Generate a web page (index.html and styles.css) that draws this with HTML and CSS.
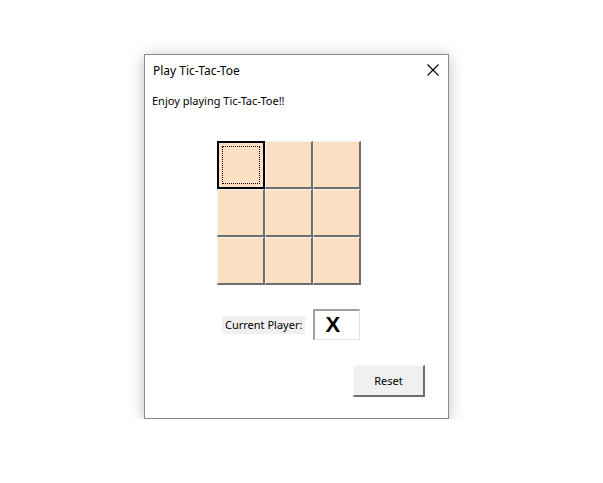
FILE: index.html
```html
<!DOCTYPE html>
<html>
<head>
    <title>Play Tic-Tac-Toe</title>
    <link rel="stylesheet" href="styles.css">
</head>
<body>
    <div class="window">
        <div class="titlebar">
            <span class="title">Play Tic-Tac-Toe</span>
            <span class="close">
                <svg width="12" height="12" viewBox="0 0 12 12">
                    <path d="M0.5 0.5 L11.5 11.5 M11.5 0.5 L0.5 11.5" stroke="#000" stroke-width="1.1" fill="none"/>
                </svg>
            </span>
        </div>
        <p class="intro">Enjoy playing Tic-Tac-Toe!!</p>

        <div class="board">
            <div class="cell focused"><div class="focus-ring"></div></div>
            <div class="cell"></div>
            <div class="cell"></div>
            <div class="cell"></div>
            <div class="cell"></div>
            <div class="cell"></div>
            <div class="cell"></div>
            <div class="cell"></div>
            <div class="cell"></div>
        </div>

        <div class="status">
            <span class="label">Current Player:</span>
            <span class="player">X</span>
        </div>

        <div class="actions">
            <button class="reset">Reset</button>
        </div>
    </div>
</body>
</html>
```

FILE: styles.css
```css
body {
    margin: 0;
    background-color: #fff;
    font-family: "Noto Sans", "Open Sans", sans-serif;
    font-size: 11px;
    color: #000;
}
.window {
    margin: 54px 0 0 144px;
    width: 303px;
    height: 363px;
    border: 1px solid #8a8a8a;
    background-color: #fff;
    box-shadow: 0 2px 14px rgba(0, 0, 0, 0.25);
}
.titlebar {
    display: flex;
    justify-content: space-between;
    align-items: center;
    height: 30px;
    padding: 0 9px 0 8px;
}
.title {
    font-size: 12px;
}
.close {
    display: flex;
}
.intro {
    margin: 8px 0 0 7px;
}
.board {
    display: grid;
    grid-template-columns: repeat(3, 48px);
    grid-template-rows: repeat(3, 48px);
    width: 144px;
    margin: 33px 0 0 72px;
}
.cell {
    box-sizing: border-box;
    background-color: #fde0c4;
    border-top: 1px solid #f4f4f4;
    border-left: 1px solid #f4f4f4;
    border-right: 2px solid #6e6e6e;
    border-bottom: 2px solid #6e6e6e;
}
.cell.focused {
    border: 2px solid #000;
    padding: 3px;
}
.focus-ring {
    height: 100%;
    border: 1px dotted #000;
    box-sizing: border-box;
}
.status {
    display: flex;
    align-items: center;
    margin: 24px 0 0 77px;
}
.label {
    background-color: #f0f0f0;
    padding: 1px 3px;
    height: 16px;
    line-height: 16px;
}
.player {
    box-sizing: border-box;
    width: 47px;
    height: 31px;
    margin-left: 8px;
    border-top: 2px solid #a0a0a0;
    border-left: 2px solid #a0a0a0;
    border-right: 1px solid #e3e3e3;
    border-bottom: 1px solid #e3e3e3;
    font-family: "Liberation Sans", Arial, sans-serif;
    font-weight: bold;
    font-size: 22px;
    line-height: 27px;
    padding-left: 10px;
}
.actions {
    display: flex;
    justify-content: flex-end;
    margin: 25px 23px 0 0;
}
.reset {
    width: 72px;
    height: 32px;
    background-color: #f0f0f0;
    font-family: "Noto Sans", "Open Sans", sans-serif;
    font-size: 11px;
    border-top: 1px solid #f8f8f8;
    border-left: 1px solid #f8f8f8;
    border-right: 2px solid #6e6e6e;
    border-bottom: 2px solid #6e6e6e;
    padding: 0;
}
```
